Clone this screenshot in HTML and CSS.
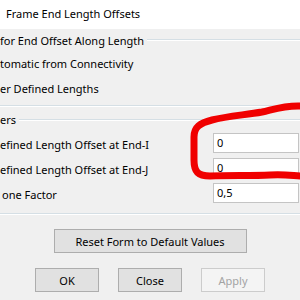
FILE: index.html
```html
<!DOCTYPE html>
<html lang="en">
<head>
  <meta charset="UTF-8" />
  <title>Frame End Length Offsets</title>
  <link rel="stylesheet" href="styles.css">
</head>
<body>
  <div class="titlebar">Frame End Length Offsets</div>

  <div class="dialog">
    <div class="group-head">
      <span class="legend">for End Offset Along Length</span>
      <span class="rule"></span>
    </div>
    <div class="row">tomatic from Connectivity</div>
    <div class="row">er Defined Lengths</div>
    <div class="group-end"></div>

    <div class="group-head second">
      <span class="legend">ers</span>
      <span class="rule"></span>
    </div>
    <div class="row field">
      <label>efined Length Offset at End-I</label>
      <input type="text" value="0">
    </div>
    <div class="row field">
      <label>efined Length Offset at End-J</label>
      <input type="text" value="0">
    </div>
    <div class="row field">
      <label class="indent">one Factor</label>
      <input type="text" value="0,5">
    </div>
    <div class="group-end last"></div>

    <div class="buttons reset">
      <button class="wide">Reset Form to Default Values</button>
    </div>
    <div class="buttons">
      <button>OK</button>
      <button>Close</button>
      <button class="disabled">Apply</button>
    </div>
  </div>

  <!-- red marker drawn round the two offset boxes -->
  <svg class="marker" width="300" height="300" viewBox="0 0 300 300">
    <path d="M302 106 C285 105 275 109 262 112 C245 115 228 116 212 120 C200 123 194 127 194 137 L194 160 C194 172 198 176 210 176 C230 175 250 176 270 175 C285 174 295 176 302 176"
          fill="none" stroke="#f00000" stroke-width="7" stroke-linecap="round" stroke-linejoin="round"/>
  </svg>
</body>
</html>
```

FILE: styles.css
```css
body {
  margin: 0;
  width: 300px;
  height: 300px;
  overflow: hidden;
  background: #f0f0f0;
  font-family: "Noto Sans", Lato, sans-serif;
  font-size: 11px;
  color: #000;
}
.titlebar {
  height: 29px;
  line-height: 27px;
  padding-left: 6px;
  background: #fff;
}
.group-head {
  display: flex;
  align-items: center;
  height: 22px;
}
.group-head.second {
  margin-top: 2px;
  height: 21px;
}
.legend {
  padding-right: 3px;
  white-space: nowrap;
}
.rule {
  flex: 1;
  height: 0;
  border-top: 1px solid #d5dfe5;
  border-bottom: 1px solid #fff;
}
.row {
  height: 25px;
  line-height: 25px;
  white-space: nowrap;
}
.field {
  display: flex;
  align-items: center;
}
.field label {
  flex: 1;
  padding-top: 3px;
}
.field .indent {
  padding-left: 2px;
}
input {
  width: 86px;
  height: 20px;
  box-sizing: border-box;
  margin: 0 1px 0 0;
  padding: 0 3px;
  border: 1px solid #c4c4c4;
  background: #fff;
  font-family: inherit;
  font-size: 11px;
  color: #000;
}
.group-end {
  margin-top: 4px;
  border-top: 1px solid #d5dfe5;
  border-bottom: 1px solid #fff;
}
.group-end.last {
  margin-top: 8px;
}
.buttons {
  display: flex;
  justify-content: center;
  gap: 19px;
  margin-top: 15px;
}
.buttons.reset {
  margin-top: 14px;
}
button {
  width: 64px;
  height: 24px;
  padding: 0;
  border: 1px solid #adadad;
  background: #e1e1e1;
  font-family: inherit;
  font-size: 11px;
  color: #000;
}
button.wide {
  width: 193px;
}
button.disabled {
  border-color: #cccccc;
  background: #f4f4f4;
  color: #a3a3a3;
}
.marker {
  position: absolute;
  left: 0;
  top: 0;
  pointer-events: none;
}
```
